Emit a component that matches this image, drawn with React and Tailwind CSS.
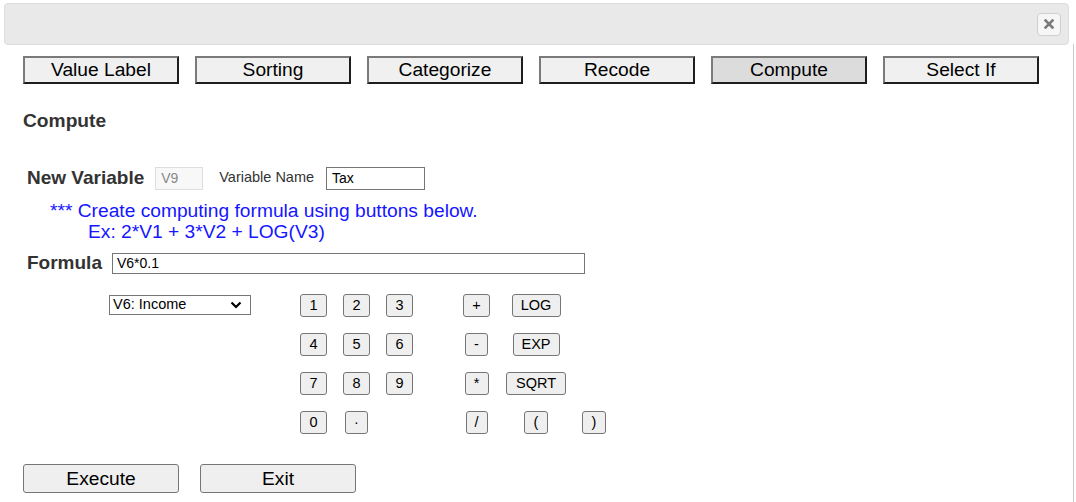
import React from 'react';

const tabs = ['Value Label', 'Sorting', 'Categorize', 'Recode', 'Compute', 'Select If'];

function Key({ label, w = 'w-[27px]' }) {
  return (
    <button
      type="button"
      className={`${w} h-[23px] rounded-[3px] border border-[#767676] bg-[#efefef] text-[14.5px] leading-none text-black flex items-center justify-center`}
    >
      {label}
    </button>
  );
}

function Cell({ w, children }) {
  return <div className={`${w} flex justify-center`}>{children}</div>;
}

export default function App() {
  const rows = [
    [['1'], ['2'], ['3'], ['+', 'w-[27px]'], ['LOG', 'w-[49px]'], null],
    [['4'], ['5'], ['6'], ['-', 'w-[23px]'], ['EXP', 'w-[47px]'], null],
    [['7'], ['8'], ['9'], ['*', 'w-[24px]'], ['SQRT', 'w-[60px]'], null],
    [['0'], ['·', 'w-[23px]'], null, ['/', 'w-[22px]'], ['(', 'w-[24px]'], [')', 'w-[24px]']],
  ];
  const widths = ['w-[43px]', 'w-[43px]', 'w-[43px]', 'w-[43px]', 'w-[76px]', 'w-[40px]'];

  return (
    <div className="w-[1076px] h-[502px] bg-white font-['Liberation_Sans',Arial,sans-serif] text-black overflow-hidden relative">
      <div className="absolute right-[2px] top-[44px] bottom-0 w-px bg-[#c8c8c8]" />

      <div className="ml-[4px] mr-[7px] mt-[3px] h-[42px] rounded-[4px] border border-[#dcdcdc] bg-[#e9e9e9] flex items-center justify-end pr-[7px]">
        <button
          type="button"
          className="w-[24px] h-[23px] rounded-[4px] border border-[#cfcfcf] bg-[#f6f6f6] flex items-center justify-center"
        >
          <svg width="10" height="10" viewBox="0 0 10 10">
            <path d="M1.5 1.5 L8.5 8.5 M8.5 1.5 L1.5 8.5" stroke="#7a7a7a" strokeWidth="2.6" strokeLinecap="square" />
          </svg>
        </button>
      </div>

      <div className="mt-[11px] ml-[23px] flex gap-[16px]">
        {tabs.map((t) => (
          <button
            key={t}
            type="button"
            className={`w-[156px] h-[28px] border-2 border-t-[#7a7a7a] border-l-[#7a7a7a] border-b-[#1e1e1e] border-r-[#1e1e1e] text-[19.2px] leading-none flex items-center justify-center ${
              t === 'Compute' ? 'bg-[#dcdcdc]' : 'bg-[#f0f0f0]'
            }`}
          >
            {t}
          </button>
        ))}
      </div>

      <div className="ml-[23px] mt-[26px] text-[19.2px] font-bold text-[#333] leading-[21px]">Compute</div>

      <div className="ml-[27px] mt-[35px] flex items-center h-[24px]">
        <span className="text-[19px] font-bold text-[#333]">New Variable</span>
        <input
          disabled
          value="V9"
          readOnly
          className="ml-[11px] w-[48px] h-[23px] border border-[#dedede] bg-[#f8f8f8] text-[14px] text-[#888] px-[5px] outline-none"
        />
        <span className="ml-[16px] text-[14.5px] text-[#333]">Variable Name</span>
        <input
          value="Tax"
          readOnly
          className="ml-[12px] w-[99px] h-[23px] border border-[#767676] bg-white text-[14px] text-black px-[5px] outline-none"
        />
      </div>

      <div className="mt-[10px] text-[19.2px] leading-[21px] text-[#1515ff]">
        <div className="ml-[50px]">*** Create computing formula using buttons below.</div>
        <div className="ml-[88px]">Ex: 2*V1 + 3*V2 + LOG(V3)</div>
      </div>

      <div className="ml-[27px] mt-[10px] flex items-center h-[22px]">
        <span className="text-[19px] font-bold text-[#333]">Formula</span>
        <input
          value="V6*0.1"
          readOnly
          className="ml-[10px] w-[473px] h-[21px] border border-[#767676] bg-white text-[14px] text-black px-[4px] outline-none"
        />
      </div>

      <div className="mt-[20px] ml-[109px] flex">
        <div className="w-[183px]">
          <div className="mt-[1px] w-[142px] h-[20px] border border-[#767676] bg-white text-[14.5px] flex items-center justify-between pl-[3px] pr-[8px]">
            <span>V6: Income</span>
            <svg width="12" height="8" viewBox="0 0 12 8">
              <path d="M1.5 1.5 L6 6 L10.5 1.5" stroke="#000" strokeWidth="2.2" fill="none" />
            </svg>
          </div>
        </div>
        <div className="flex flex-col gap-[16px]">
          {rows.map((r, i) => (
            <div key={i} className="flex">
              {r.map((k, j) => (
                <React.Fragment key={j}>
                  {j === 3 && <div className="w-[34px]" />}
                  <Cell w={widths[j]}>{k ? <Key label={k[0]} w={k[1]} /> : null}</Cell>
                </React.Fragment>
              ))}
            </div>
          ))}
        </div>
      </div>

      <div className="ml-[23px] mt-[30px] flex gap-[21px]">
        {['Execute', 'Exit'].map((t) => (
          <button
            key={t}
            type="button"
            className="w-[156px] h-[29px] rounded-[3px] border border-[#767676] bg-[#efefef] text-[19.2px] leading-none flex items-center justify-center"
          >
            {t}
          </button>
        ))}
      </div>
    </div>
  );
}
